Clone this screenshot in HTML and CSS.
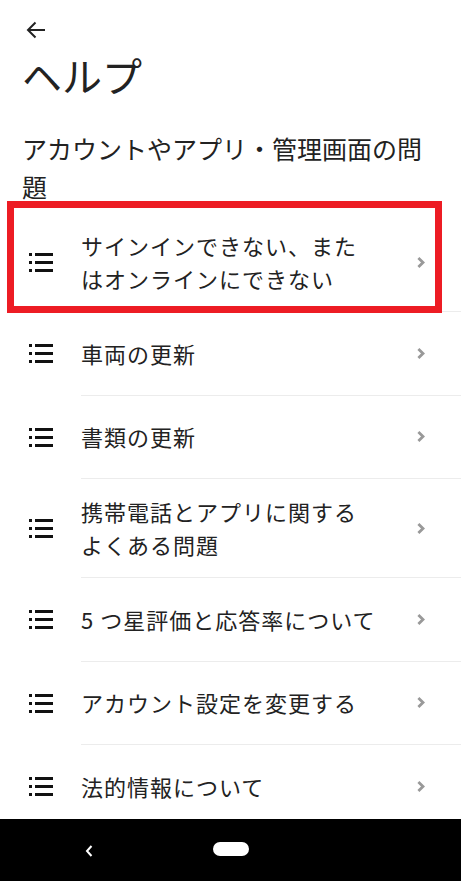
FILE: index.html
```html
<!DOCTYPE html>
<html lang="ja">
<head>
  <meta charset="UTF-8" />
  <meta name="viewport" content="width=device-width, initial-scale=1.0"/>
  <title>ヘルプ</title>
  <link rel="stylesheet" href="styles.css">
</head>
<body>
  <div class="screen">
    <div class="content">
      <header class="header">
        <button class="back-btn" aria-label="戻る">
          <svg width="20" height="20" viewBox="0 0 20 20">
            <path d="M19 10H2M9.5 2.5L2 10l7.5 7.5" fill="none" stroke="#222" stroke-width="2"/>
          </svg>
        </button>
        <h1>ヘルプ</h1>
        <h2>アカウントやアプリ・管理画面の問題</h2>
      </header>

      <ul class="topics">
        <li class="topic highlighted">
          <span class="list-icon"><i></i><i></i><i></i></span>
          <div class="topic-body">
            <span class="topic-text">サインインできない、また<br>はオンラインにできない</span>
            <span class="chevron"></span>
          </div>
          <span class="highlight-frame"></span>
        </li>
        <li class="topic">
          <span class="list-icon"><i></i><i></i><i></i></span>
          <div class="topic-body">
            <span class="topic-text">車両の更新</span>
            <span class="chevron"></span>
          </div>
        </li>
        <li class="topic">
          <span class="list-icon"><i></i><i></i><i></i></span>
          <div class="topic-body">
            <span class="topic-text">書類の更新</span>
            <span class="chevron"></span>
          </div>
        </li>
        <li class="topic">
          <span class="list-icon"><i></i><i></i><i></i></span>
          <div class="topic-body">
            <span class="topic-text">携帯電話とアプリに関する<br>よくある問題</span>
            <span class="chevron"></span>
          </div>
        </li>
        <li class="topic">
          <span class="list-icon"><i></i><i></i><i></i></span>
          <div class="topic-body">
            <span class="topic-text">5 つ星評価と応答率について</span>
            <span class="chevron"></span>
          </div>
        </li>
        <li class="topic">
          <span class="list-icon"><i></i><i></i><i></i></span>
          <div class="topic-body">
            <span class="topic-text">アカウント設定を変更する</span>
            <span class="chevron"></span>
          </div>
        </li>
        <li class="topic">
          <span class="list-icon"><i></i><i></i><i></i></span>
          <div class="topic-body">
            <span class="topic-text">法的情報について</span>
            <span class="chevron"></span>
          </div>
        </li>
      </ul>
    </div>

    <nav class="nav-bar">
      <svg class="nav-back" width="8" height="12" viewBox="0 0 8 12">
        <path d="M6.5 1L2 6l4.5 5" fill="none" stroke="#fff" stroke-width="2"/>
      </svg>
      <span class="nav-home"></span>
    </nav>
  </div>
</body>
</html>
```

FILE: styles.css
```css
:root {
  --text: #222222;
  --divider: #ececec;
  --chevron: #999999;
  --highlight: #ed1c24;
}

* {
  box-sizing: border-box;
}

body {
  margin: 0;
  background: #ffffff;
  color: var(--text);
  font-family: "Noto Sans CJK JP", "Noto Sans", sans-serif;
}

.screen {
  display: flex;
  flex-direction: column;
  height: 881px;
  overflow: hidden;
}

.content {
  flex: 1;
  overflow: hidden;
}

.header {
  padding: 20px 22px 0 22px;
}

.back-btn {
  display: block;
  margin: 0 0 0 4px;
  padding: 0;
  width: 20px;
  height: 20px;
  border: none;
  background: none;
}

.back-btn svg {
  display: block;
}

h1 {
  margin: 11px 0 0 0;
  font-size: 40px;
  line-height: 48px;
  font-weight: 400;
}

h2 {
  margin: 30px 0 0 0;
  font-size: 25px;
  line-height: 38px;
  font-weight: 400;
}

.topics {
  list-style: none;
  margin: 8px 0 0 0;
  padding: 0;
}

.topic {
  position: relative;
  display: flex;
  align-items: center;
  padding-left: 29px;
}

.list-icon {
  display: flex;
  flex-direction: column;
  gap: 5px;
  width: 24px;
  margin-right: 28px;
}

.list-icon i {
  display: block;
  height: 3px;
  border-left: 3px solid #111;
  background: linear-gradient(#111, #111) no-repeat 3px 0 / 18px 100%;
}

.topic-body {
  flex: 1;
  display: flex;
  align-items: center;
  min-height: 83.5px;
  padding: 16px 36px 16px 0;
  border-bottom: 1px solid var(--divider);
}

.topic-text {
  flex: 1;
  font-size: 22px;
  line-height: 33px;
  letter-spacing: 1px;
}

.chevron {
  width: 8px;
  height: 11px;
  background: no-repeat center / 8px 11px
    url("data:image/svg+xml;utf8,<svg xmlns='http://www.w3.org/2000/svg' width='8' height='11' viewBox='0 0 8 11'><path d='M1.4 1L6 5.5L1.4 10' fill='none' stroke='%23999999' stroke-width='2.8'/></svg>");
}

.highlight-frame {
  position: absolute;
  left: 7px;
  top: -12px;
  width: 435px;
  height: 112px;
  border: 7.5px solid var(--highlight);
  pointer-events: none;
}

.nav-bar {
  flex: 0 0 62px;
  display: flex;
  align-items: center;
  padding-left: 85px;
  background: #000000;
}

.nav-back {
  display: block;
  margin-top: 2px;
}

.nav-home {
  width: 36px;
  height: 14px;
  margin-left: 120px;
  margin-bottom: 2px;
  border-radius: 7px;
  background: #ffffff;
}
```
